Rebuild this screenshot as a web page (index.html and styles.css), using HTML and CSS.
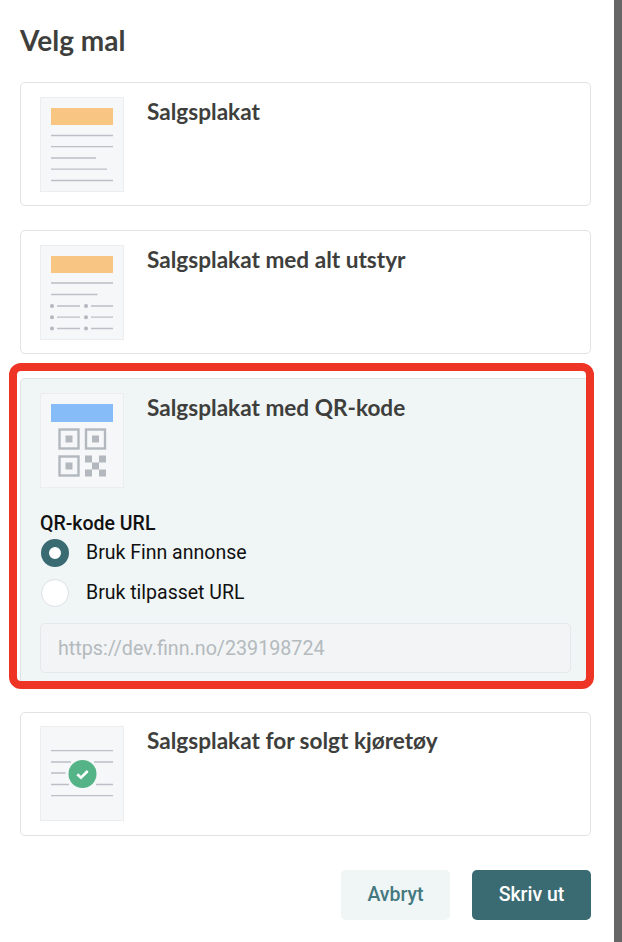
FILE: index.html
```html
<!DOCTYPE html>
<html lang="no">
<head>
<meta charset="utf-8">
<title>Velg mal</title>
<link rel="stylesheet" href="styles.css">
</head>
<body>
<main class="panel">
  <h1 class="heading">Velg mal</h1>
  <div class="cards">
    <section class="card">
      <div class="card-head">
        <svg class="thumb" viewBox="0 0 84 95" aria-hidden="true">
          <rect class="paper" x=".5" y=".5" width="83" height="94"/>
          <rect class="bar-orange" x="11" y="11" width="62" height="17"/>
          <path class="ln" d="M11 38.5H73M11 49.7H73M11 61H56M11 72.2H67M11 83.5H73"/>
        </svg>
        <h2 class="card-title">Salgsplakat</h2>
      </div>
    </section>
    <section class="card">
      <div class="card-head">
        <svg class="thumb" viewBox="0 0 84 95" aria-hidden="true">
          <rect class="paper" x=".5" y=".5" width="83" height="94"/>
          <rect class="bar-orange" x="11" y="11" width="62" height="17"/>
          <path class="ln" d="M11 38H73M11 49.500H57.500M17 61H40M17 72.200H40M17 83.500H40M51 61H73M51 72.200H73M51 83.500H73"/>
          <g class="dot">
            <circle cx="12" cy="61" r="2"/><circle cx="12" cy="72.200" r="2"/><circle cx="12" cy="83.500" r="2"/>
            <circle cx="46" cy="61" r="2"/><circle cx="46" cy="72.200" r="2"/><circle cx="46" cy="83.500" r="2"/>
          </g>
        </svg>
        <h2 class="card-title">Salgsplakat med alt utstyr</h2>
      </div>
    </section>
    <section class="card card-selected">
      <div class="card-head">
        <svg class="thumb" viewBox="0 0 84 95" aria-hidden="true">
          <rect class="paper" x=".5" y=".5" width="83" height="94"/>
          <rect class="bar-blue" x="11" y="11" width="62" height="18"/>
          <g class="qr-frame">
            <rect x="19.500" y="36.500" width="19" height="19"/>
            <rect x="46" y="36.500" width="19" height="19"/>
            <rect x="19.500" y="63.500" width="19" height="19"/>
          </g>
          <g class="qr-fill">
            <rect x="25.500" y="42.500" width="7" height="7"/>
            <rect x="52" y="42.500" width="7" height="7"/>
            <rect x="25.500" y="69.500" width="7" height="7"/>
            <rect x="45" y="62.500" width="7" height="7"/>
            <rect x="59" y="62.500" width="7" height="7"/>
            <rect x="52" y="69.500" width="7" height="7"/>
            <rect x="45" y="76.500" width="7" height="7"/>
            <rect x="59" y="76.500" width="7" height="7"/>
          </g>
        </svg>
        <h2 class="card-title">Salgsplakat med QR-kode</h2>
      </div>
      <div class="qr-options">
        <div class="qr-label">QR-kode URL</div>
        <div class="radio-row">
          <span class="radio radio-on"></span>
          <span class="radio-text">Bruk Finn annonse</span>
        </div>
        <div class="radio-row">
          <span class="radio"></span>
          <span class="radio-text">Bruk tilpasset URL</span>
        </div>
        <div class="url-field">https://dev.finn.no/239198724</div>
      </div>
      <div class="highlight"></div>
    </section>
    <section class="card">
      <div class="card-head">
        <svg class="thumb" viewBox="0 0 84 95" aria-hidden="true">
          <rect class="paper" x=".5" y=".5" width="83" height="94"/>
          <path class="ln" d="M11 24.700H73M11 36H31M54 36H73M11 47H25.500M11 58.500H29M56 58.500H73M11 69.700H73"/>
          <circle class="check-bg" cx="42.500" cy="48" r="14"/>
          <path class="check" d="M37.300 48.200L41 51.700L47.700 45"/>
        </svg>
        <h2 class="card-title">Salgsplakat for solgt kjøretøy</h2>
      </div>
    </section>
  </div>
  <div class="actions">
    <button class="btn btn-ghost" type="button">Avbryt</button>
    <button class="btn btn-primary" type="button">Skriv ut</button>
  </div>
</main>
</body>
</html>
```
FILE: styles.css
```css
* { box-sizing: border-box; }
html, body { margin: 0; height: 100%; }
body { background: #666; overflow: hidden; }
.panel {
  width: 614px;
  height: 942px;
  background: #fff;
  padding: 0 23px 0 20px;
}
.heading {
  margin: 0;
  height: 82px;
  padding-top: 23px;
  font: 700 28px/34px Lato, sans-serif;
  color: #3e3f3d;
}
.cards { display: flex; flex-direction: column; gap: 24px; }
.card {
  position: relative;
  border: 1px solid #e1e2e2;
  border-radius: 5px;
  background: #fff;
  padding: 13.5px 19px;
}
.card-selected { background: #f0f5f5; padding-bottom: 14px; }
.card-head { display: flex; align-items: flex-start; gap: 23px; }
.thumb { display: block; width: 84px; height: 95px; flex: none; }
.card-title {
  margin: 0;
  font: 700 22.6px/29px Lato, sans-serif;
  color: #3e3f3d;
}
.paper { fill: #f6f7f9; stroke: #ecedef; }
.bar-orange { fill: #f9c583; }
.bar-blue { fill: #86bdf8; }
.ln { stroke: #bcbfc6; stroke-width: 1.3; fill: none; }
.dot circle, .qr-fill rect { fill: #b3b8be; }
.qr-frame rect { fill: none; stroke: #b3b8be; stroke-width: 2.4; }
.check-bg { fill: #55b487; }
.check { fill: none; stroke: #fff; stroke-width: 2.6; }
.qr-options { margin-top: 24.5px; font-family: Roboto, sans-serif; }
.qr-label {
  font-weight: 500;
  font-size: 19.5px;
  line-height: 24px;
  color: #111;
}
.radio-row {
  display: flex;
  align-items: center;
  gap: 17.5px;
  height: 28px;
  margin-bottom: 11.5px;
  padding-left: 0.5px;
}
.radio-row:nth-child(2) { margin-top: 3px; }
.radio {
  width: 28px;
  height: 28px;
  border: 1px solid #dde1e3;
  border-radius: 50%;
  background: #fff;
}
.radio-on { border: 8px solid #3b6b72; }
.radio-text { font-size: 19.5px; line-height: 24px; color: #111; }
.url-field {
  height: 50px;
  margin-top: 16px;
  padding: 0 17px;
  border: 1px solid #e4e8ea;
  border-radius: 5px;
  background: #f2f4f6;
  font-size: 19.7px;
  line-height: 50px;
  color: #b4babd;
}
.highlight {
  position: absolute;
  top: -16px;
  left: -12px;
  right: -4px;
  bottom: -2px;
  border: 8px solid #ee3424;
  border-radius: 12px;
  pointer-events: none;
}
.actions { display: flex; justify-content: flex-end; gap: 22px; margin-top: 34px; }
.btn {
  height: 50px;
  border: 0;
  border-radius: 5px;
  padding: 1px 0 0;
  font: 500 19.5px/24px Roboto, sans-serif;
}
.btn-ghost { width: 109px; background: #f0f5f5; color: #44787f; }
.btn-primary { width: 119px; background: #3b6b72; color: #fff; }
```
